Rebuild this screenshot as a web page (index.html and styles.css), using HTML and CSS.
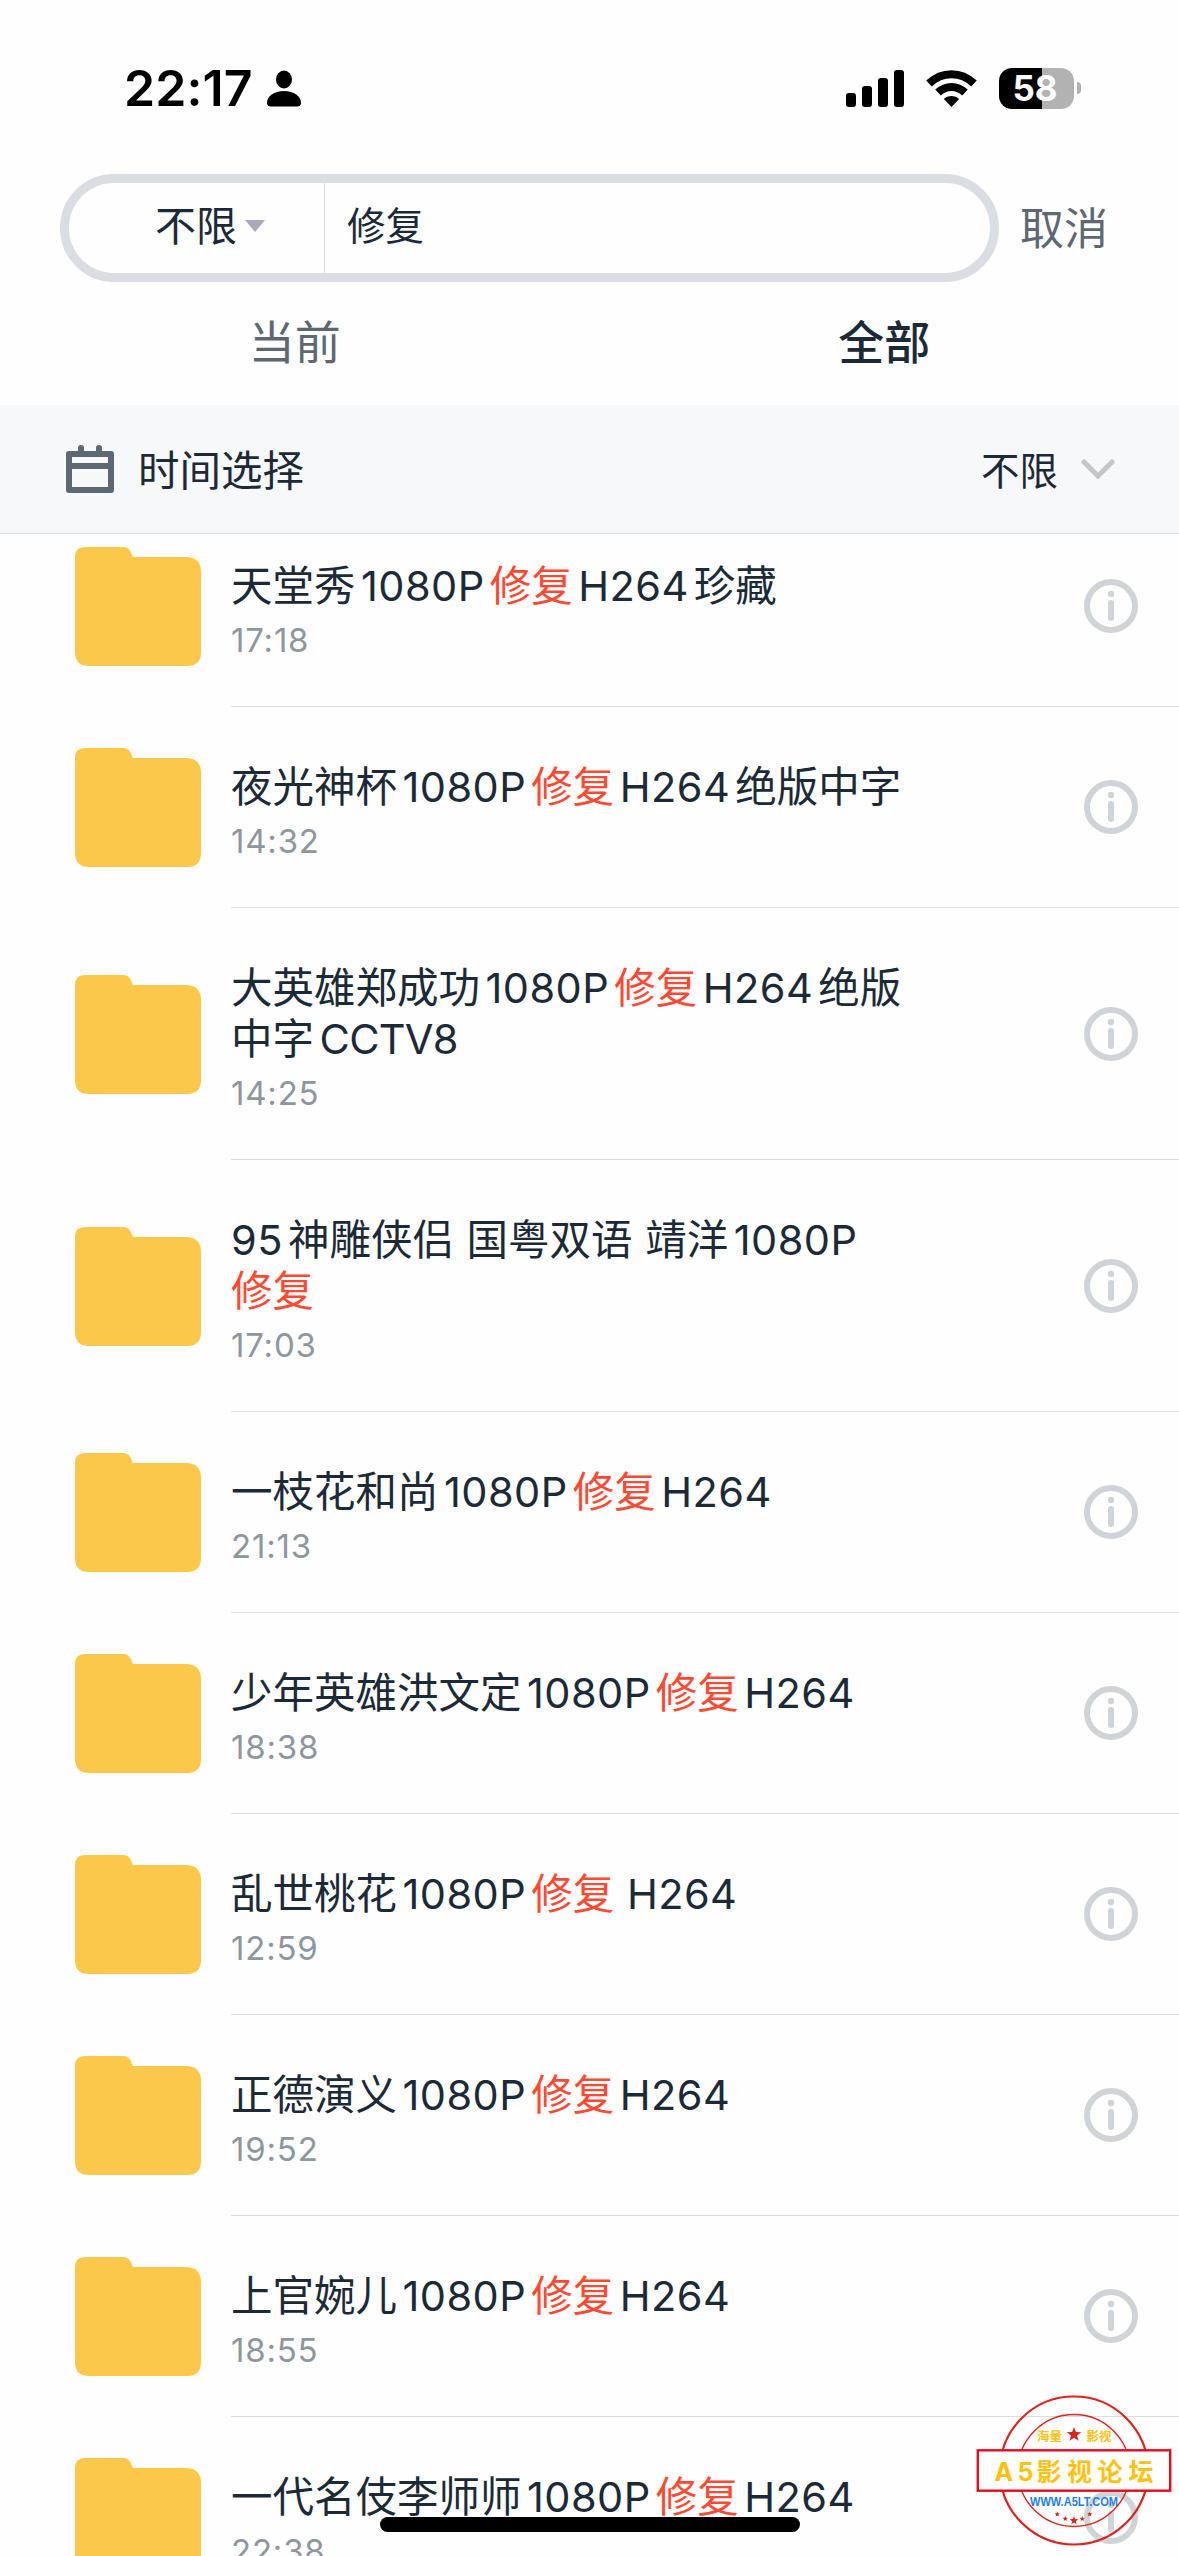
FILE: index.html
```html
<!DOCTYPE html>
<html lang="zh-CN">
<head>
<meta charset="utf-8">
<title>搜索</title>
<link rel="stylesheet" href="styles.css">
</head>
<body>
<svg class="defs" aria-hidden="true">
  <symbol id="folder" viewBox="0 0 126 119"><path fill="#fcc84b" d="M10 0H48C55 0 56 6 58 10H112Q126 11 126 25V105Q126 119 112 119H14Q0 119 0 105V10Q0 0 10 0Z"/></symbol>
  <symbol id="info" viewBox="0 0 54 54"><circle cx="27" cy="27" r="24" fill="none" stroke="#d0d4d7" stroke-width="6"/><circle cx="27" cy="15" r="3.2" fill="#d0d4d7"/><path d="M27 24V39" stroke="#d0d4d7" stroke-width="6" stroke-linecap="round"/></symbol>
  <symbol id="star" viewBox="-10 -10 20 20"><path d="M0-10 2.5-3.3 9.6-3 4 1.4 6 8.2 0 4.2-6 8.2-4 1.4-9.6-3-2.5-3.3Z" fill="#d9251d"/></symbol>
</svg>
<div class="screen">
  <header class="status">
    <div class="clock">22:17
      <svg width="34" height="37" viewBox="0 0 34 37"><ellipse cx="17" cy="9.5" rx="8" ry="9"/><path d="M0 33C0 26 7 21 17 21S34 26 34 33Q34 36.500 30 36.500H4Q0 36.500 0 33Z"/></svg>
    </div>
    <div class="indicators">
      <svg width="58" height="37" viewBox="0 0 58 37"><rect y="23" width="10" height="14" rx="3"/><rect x="16" y="16" width="10" height="21" rx="3"/><rect x="32" y="8" width="10" height="29" rx="3"/><rect x="48" width="10" height="37" rx="3"/></svg>
      <svg width="51" height="37" viewBox="0 0 51 37"><g fill="none" stroke="#000" stroke-width="8"><path d="M3 13.500C16 1 35 1 48 13.500"/><path d="M12 22.500C20 15 31 15 39 22.500"/></g><path d="M17.800 29C22 25 29 25 33.200 29L25.500 37Z"/></svg>
      <div class="battery"><span class="level">58</span><i class="cap"></i></div>
    </div>
  </header>

  <div class="search">
    <div class="box">
      <div class="scope">不限<i class="caret"></i></div>
      <div class="query">修复</div>
    </div>
    <div class="cancel">取消</div>
  </div>

  <nav class="tabs"><div class="tab">当前</div><div class="tab active">全部</div></nav>

  <div class="filter">
    <svg width="48" height="48" viewBox="0 0 48 48"><path fill="#5e6872" fill-rule="evenodd" d="M12 6V3Q12 0 15 0T18 3V6H30V3Q30 0 33 0T36 3V6H45Q48 6 48 9V45Q48 48 45 48H3Q0 48 0 45V9Q0 6 3 6ZM6 12V18H42V12ZM6 24V42H42V24Z"/></svg>
    <span class="filter-name">时间选择</span>
    <span class="filter-value">不限</span>
    <svg width="34" height="20" viewBox="0 0 34 20"><path d="M3 3 17 17 31 3" fill="none" stroke="#c5c6c8" stroke-width="5" stroke-linecap="round"/></svg>
  </div>

  <main class="list">
    <div class="row"><svg class="folder"><use href="#folder"/></svg><div class="body"><div class="text"><div class="title">天堂秀<b>1080P</b><em>修复</em><b>H264</b>珍藏</div><div class="time">17:18</div></div><svg class="info"><use href="#info"/></svg></div></div>
    <div class="row"><svg class="folder"><use href="#folder"/></svg><div class="body"><div class="text"><div class="title">夜光神杯<b>1080P</b><em>修复</em><b>H264</b>绝版中字</div><div class="time">14:32</div></div><svg class="info"><use href="#info"/></svg></div></div>
    <div class="row tall"><svg class="folder"><use href="#folder"/></svg><div class="body"><div class="text"><div class="title">大英雄郑成功<b>1080P</b><em>修复</em><b>H264</b>绝版<br>中字<b class="caps">CCTV8</b></div><div class="time">14:25</div></div><svg class="info"><use href="#info"/></svg></div></div>
    <div class="row tall"><svg class="folder"><use href="#folder"/></svg><div class="body"><div class="text"><div class="title"><b class="first">95</b>神雕侠侣 国粤双语 靖洋<b>1080P</b><br><em>修复</em></div><div class="time">17:03</div></div><svg class="info"><use href="#info"/></svg></div></div>
    <div class="row"><svg class="folder"><use href="#folder"/></svg><div class="body"><div class="text"><div class="title">一枝花和尚<b>1080P</b><em>修复</em><b>H264</b></div><div class="time">21:13</div></div><svg class="info"><use href="#info"/></svg></div></div>
    <div class="row"><svg class="folder"><use href="#folder"/></svg><div class="body"><div class="text"><div class="title">少年英雄洪文定<b>1080P</b><em>修复</em><b>H264</b></div><div class="time">18:38</div></div><svg class="info"><use href="#info"/></svg></div></div>
    <div class="row"><svg class="folder"><use href="#folder"/></svg><div class="body"><div class="text"><div class="title">乱世桃花<b>1080P</b><em>修复</em> <b class="first">H264</b></div><div class="time">12:59</div></div><svg class="info"><use href="#info"/></svg></div></div>
    <div class="row"><svg class="folder"><use href="#folder"/></svg><div class="body"><div class="text"><div class="title">正德演义<b>1080P</b><em>修复</em><b>H264</b></div><div class="time">19:52</div></div><svg class="info"><use href="#info"/></svg></div></div>
    <div class="row"><svg class="folder"><use href="#folder"/></svg><div class="body"><div class="text"><div class="title">上官婉儿<b>1080P</b><em>修复</em><b>H264</b></div><div class="time">18:55</div></div><svg class="info"><use href="#info"/></svg></div></div>
    <div class="row"><svg class="folder"><use href="#folder"/></svg><div class="body"><div class="text"><div class="title">一代名伎李师师<b>1080P</b><em>修复</em><b>H264</b></div><div class="time">22:38</div></div><svg class="info"><use href="#info"/></svg></div></div>
  </main>

  <div class="home-bar"></div>
  <svg class="stamp" viewBox="0 0 219 176">
    <g fill="none" stroke="#d9251d"><circle cx="114" cy="90.500" r="74" stroke-width="2.200"/><circle cx="114" cy="90.500" r="56" stroke-width="1.400"/></g>
    <rect x="17.800" y="70.300" width="192.400" height="40.400" fill="#fefefe" stroke="#e60a1e" stroke-width="2.400"/>
    <g class="stamp-small"><text x="77" y="61.300">海量</text><text x="126.500" y="61.300">影视</text></g>
    <use href="#star" x="106.500" y="47" width="15" height="15"/>
    <text class="stamp-main" y="100.500" x="34.500 57.500 76.500 107 137.500 168.500">A5影视论坛</text>
    <text class="stamp-url" x="70" y="125.500" textLength="88" lengthAdjust="spacingAndGlyphs">WWW.A5LT.COM</text>
    <use href="#star" x="94.500" y="131.500" width="5.500" height="5.500"/><use href="#star" x="102.500" y="136" width="5.500" height="5.500"/><use href="#star" x="109.500" y="136" width="9" height="9"/><use href="#star" x="119.500" y="136" width="5.500" height="5.500"/><use href="#star" x="127" y="131.500" width="5.500" height="5.500"/>
  </svg>
</div>
</body>
</html>
```
FILE: styles.css
```css
* { box-sizing: border-box; }
body {
  margin: 0;
  background: #fefefe;
  color: #1c2a38;
  font-family: Inter, "Noto Sans CJK SC", sans-serif;
}
svg { display: block; flex: none; }
.defs { position: absolute; width: 0; height: 0; }
.screen {
  position: relative;
  width: 1179px;
  height: 2556px;
  overflow: hidden;
  display: flex;
  flex-direction: column;
}
.status {
  flex: none;
  height: 174px;
  padding: 67px 98px 0 124px;
  display: flex;
  justify-content: space-between;
  align-items: flex-start;
}
.clock {
  display: flex;
  align-items: center;
  gap: 14px;
  height: 42px;
  color: #000;
  font-size: 50px;
  font-weight: 600;
  letter-spacing: 0.1px;
}
.indicators { display: flex; align-items: center; height: 42px; gap: 22px; }
.battery { display: flex; align-items: center; gap: 3px; }
.level {
  width: 75px;
  height: 41px;
  padding-right: 3px;
  border-radius: 13px;
  background: linear-gradient(90deg, #000 43px, #b2b2b2 43px);
  color: #fff;
  font-size: 35px;
  font-weight: 700;
  line-height: 41px;
  text-align: center;
}
.cap { width: 4px; height: 12px; border-radius: 0 4px 4px 0; background: #b2b2b2; }
.search { flex: none; display: flex; height: 108px; padding-left: 60px; align-items: center; }
.box {
  width: 939px;
  height: 108px;
  border: 9px solid #dadde2;
  border-radius: 56px;
  display: flex;
}
.scope {
  width: 256px;
  padding-left: 86px;
  border-right: 1px solid #dcdddf;
  display: flex;
  align-items: center;
  gap: 8px;
  font-size: 41px;
  line-height: 84px;
  height: 90px;
  padding-bottom: 4px;
}
.caret { border: 10px solid transparent; border-top: 12px solid #a9acb8; border-bottom: 0; }
.query { padding-left: 22px; font-size: 38.5px; line-height: 86px; }
.cancel { margin-left: 21px; font-size: 44px; line-height: 100px; padding-top: 2px; color: #5e6872; }
.tabs { flex: none; height: 123px; display: flex; }
.tab { flex: 1; text-align: center; font-size: 46px; line-height: 121px; color: #5e6872; }
.tab.active { color: #1c2a38; font-weight: 500; }
.filter {
  flex: none;
  height: 129px;
  padding: 0 64px 0 66px;
  border-bottom: 1px solid #dcdddf;
  background: #f7f8fa;
  display: flex;
  align-items: center;
}
.filter-name { margin-left: 24px; padding-bottom: 3px; font-size: 41.5px; }
.filter-value { margin-left: auto; margin-right: 23px; padding-bottom: 3px; font-size: 38.5px; }
.list { margin-top: -28px; clip-path: inset(28px 0 0 0); }
.row { display: flex; align-items: center; height: 201px; padding-left: 75px; }
.row.tall { height: 252px; }
.folder { width: 126px; height: 119px; }
.body {
  flex: 1;
  align-self: stretch;
  margin-left: 30px;
  padding-right: 41px;
  border-bottom: 1px solid #dcdddf;
  display: flex;
  align-items: center;
}
.text { flex: 1; align-self: flex-start; padding-top: 55px; }
.title { font-size: 41.5px; line-height: 50.5px; white-space: nowrap; word-spacing: 1px; }
.title b { font-weight: 400; margin: 0 5px 0 5.5px; letter-spacing: 0.45px; }
.title b.first { margin-left: 0; }
.title b.caps { letter-spacing: -0.7px; }
.title em { font-style: normal; color: #ff4a33; }
.time { margin-top: 8.5px; font-size: 33px; line-height: 40px; letter-spacing: 0.8px; color: #8f979e; }
.info { width: 54px; height: 54px; }
.home-bar {
  position: absolute;
  left: 380px;
  top: 2517px;
  width: 420px;
  height: 15px;
  border-radius: 8px;
  background: #000;
}
.stamp { position: absolute; left: 960px; top: 2380px; width: 219px; height: 176px; }
.stamp-small { fill: #ffc20e; font-size: 12.500px; font-weight: 700; }
.stamp-main { fill: #ffc20e; font-size: 25px; font-weight: 700; }
.stamp-url { fill: #1e80e8; font-family: "Liberation Sans", sans-serif; font-size: 13.500px; font-weight: 700; }
```
